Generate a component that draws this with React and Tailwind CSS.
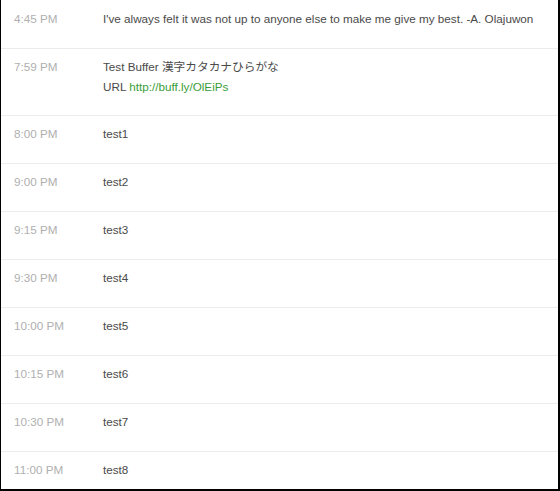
const rows = [
  { time: "4:45 PM", lines: ["I've always felt it was not up to anyone else to make me give my best. -A. Olajuwon"] },
  { time: "7:59 PM", lines: ["Test Buffer 漢字カタカナひらがな"], url: "http://buff.ly/OlEiPs" },
  { time: "8:00 PM", lines: ["test1"] },
  { time: "9:00 PM", lines: ["test2"] },
  { time: "9:15 PM", lines: ["test3"] },
  { time: "9:30 PM", lines: ["test4"] },
  { time: "10:00 PM", lines: ["test5"] },
  { time: "10:15 PM", lines: ["test6"] },
  { time: "10:30 PM", lines: ["test7"] },
  { time: "11:00 PM", lines: ["test8"] },
];

export default function App() {
  return (
    <div
      className="w-[560px] h-[491px] bg-white border-l border-r-2 border-b-2 border-black overflow-hidden"
      style={{ fontFamily: '"Liberation Sans", Arial, "Noto Sans CJK JP", sans-serif' }}
    >
      {rows.map((row, i) => (
        <div
          key={row.time}
          className={`flex border-b border-[#ececec] text-[11.7px] leading-5 ${i === 0 ? "pt-[9px]" : "pt-2"} ${row.url ? "pb-[18px]" : "pb-[19px]"}`}
        >
          <div className="w-[102px] shrink-0 pl-[13px] text-[#b0b0b0]">{row.time}</div>
          <div className="text-[#4a4a4a]">
            {row.lines.map((l) => (
              <div key={l}>{l}</div>
            ))}
            {row.url && (
              <div>
                URL <a href="#" className="text-[#3a9e3a]">{row.url}</a>
              </div>
            )}
          </div>
        </div>
      ))}
    </div>
  );
}
